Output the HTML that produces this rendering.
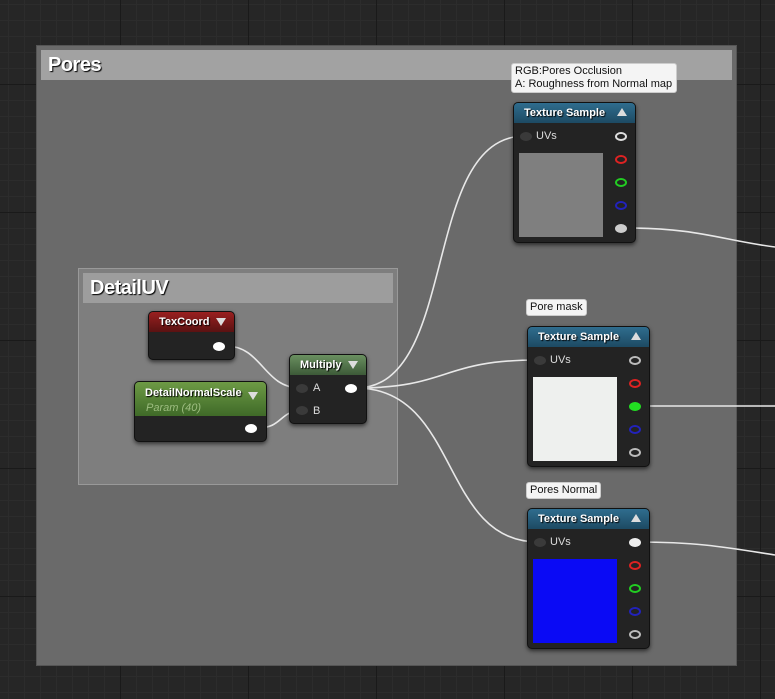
<!DOCTYPE html><html><head><style>
body{margin:0;width:775px;height:699px;overflow:hidden;background:#262626;font-family:"Liberation Sans",sans-serif;position:relative}
.grid{position:absolute;inset:0;background-image:linear-gradient(#1a1a1a 1px,transparent 1px),linear-gradient(90deg,#1a1a1a 1px,transparent 1px),linear-gradient(#2c2c2c 1px,transparent 1px),linear-gradient(90deg,#2c2c2c 1px,transparent 1px);background-size:128px 128px,128px 128px,16px 16px,16px 16px;background-position:-8px 84px,-8px 84px,-8px 4px,-8px 4px}
.cbox{position:absolute;box-sizing:border-box}
.hdr{position:absolute;left:4px;right:4px;top:4px;height:30px;color:#fff;font-weight:bold;font-size:20px;padding-left:7px;line-height:30px;text-shadow:1px 1px 1px #000;letter-spacing:-0.5px}
.node{position:absolute;background:#232323;border:1px solid #111;border-radius:5px;box-shadow:0 2px 4px rgba(0,0,0,.6);color:#ddd;font-size:11px;box-sizing:border-box}
.nh{height:20px;border-radius:4px 4px 0 0;color:#fff;font-weight:bold;font-size:11px;line-height:20px;padding-left:10px;position:relative;text-shadow:1px 1px 1px #000}
.tri{position:absolute;right:8px;top:6px;width:0;height:0;border-left:5px solid transparent;border-right:5px solid transparent}
.up{border-bottom:8px solid #ddd;top:5px}.dn{border-top:8px solid #ddd}
.pin{position:absolute;width:12px;height:9px;border-radius:50%;box-sizing:border-box}
.tip{position:absolute;background:#f4f4f4;border:1px solid #ccc;border-radius:3px;font-size:11px;color:#111;padding:1px 3px;line-height:13px}
.lbl{position:absolute;font-size:11px;color:#ddd}
</style></head><body>
<div class="grid"></div>
<div class="cbox" style="left:36px;top:45px;width:701px;height:621px;background:#6a6a6a;border:1px solid #555"><div class="hdr" style="background:#a2a2a2">Pores</div></div>
<div class="cbox" style="left:78px;top:268px;width:320px;height:217px;background:#7e7e7e;border:1px solid #999"><div class="hdr" style="background:#9d9d9d">DetailUV</div></div>
<svg style="position:absolute;left:0;top:0" width="775" height="699" fill="none" stroke="#e8e8e8" stroke-width="1.6">
<path d="M226 346 C262 346 264 388 300 388"/>
<path d="M258 428 C282 428 280 411 300 411"/>
<path d="M356 388 C460 388 420 136 525 136"/>
<path d="M356 388 C450 388 440 360 538 360"/>
<path d="M356 388 C460 388 440 542 538 542"/>
<path d="M624 228 C700 228 720 240 775 247"/>
<path d="M638 406 L775 406"/>
<path d="M638 542 C700 542 730 548 775 555"/>
</svg>
<div class="tip" style="left:511px;top:63px;width:158px">RGB:Pores Occlusion<br>A: Roughness from Normal map</div>
<div class="tip" style="left:526px;top:299px">Pore mask</div>
<div class="tip" style="left:526px;top:482px">Pores Normal</div>
<div class="node" style="left:513px;top:102px;width:123px;height:141px"><div class="nh" style="background:linear-gradient(#2f6d8e,#1d4a63)">Texture Sample<div class="tri up"></div></div>
<div class="pin" style="left:6px;top:29px;background:#3a3a3a"></div><div class="lbl" style="left:22px;top:27px">UVs</div>
<div style="position:absolute;left:5px;top:50px;width:84px;height:84px;background:#7f7f7f"></div>
<div class="pin" style="left:101px;top:29px;border:2px solid #ddd"></div>
<div class="pin" style="left:101px;top:52px;border:2px solid #d22"></div>
<div class="pin" style="left:101px;top:75px;border:2px solid #2c2"></div>
<div class="pin" style="left:101px;top:98px;border:2px solid #22b"></div>
<div class="pin" style="left:101px;top:121px;background:#ccc"></div></div>
<div class="node" style="left:527px;top:326px;width:123px;height:141px"><div class="nh" style="background:linear-gradient(#2f6d8e,#1d4a63)">Texture Sample<div class="tri up"></div></div>
<div class="pin" style="left:6px;top:29px;background:#3a3a3a"></div><div class="lbl" style="left:22px;top:27px">UVs</div>
<div style="position:absolute;left:5px;top:50px;width:84px;height:84px;background:#eef0ee"></div>
<div class="pin" style="left:101px;top:29px;border:2px solid #bbb"></div>
<div class="pin" style="left:101px;top:52px;border:2px solid #d22"></div>
<div class="pin" style="left:101px;top:75px;background:#2d2"></div>
<div class="pin" style="left:101px;top:98px;border:2px solid #22b"></div>
<div class="pin" style="left:101px;top:121px;border:2px solid #bbb"></div></div>
<div class="node" style="left:527px;top:508px;width:123px;height:141px"><div class="nh" style="background:linear-gradient(#2f6d8e,#1d4a63)">Texture Sample<div class="tri up"></div></div>
<div class="pin" style="left:6px;top:29px;background:#3a3a3a"></div><div class="lbl" style="left:22px;top:27px">UVs</div>
<div style="position:absolute;left:5px;top:50px;width:84px;height:84px;background:#0a0af5"></div>
<div class="pin" style="left:101px;top:29px;background:#eee"></div>
<div class="pin" style="left:101px;top:52px;border:2px solid #d22"></div>
<div class="pin" style="left:101px;top:75px;border:2px solid #2c2"></div>
<div class="pin" style="left:101px;top:98px;border:2px solid #22b"></div>
<div class="pin" style="left:101px;top:121px;border:2px solid #bbb"></div></div>
<div class="node" style="left:148px;top:311px;width:87px;height:49px"><div class="nh" style="background:linear-gradient(#9a2020,#5a1212)">TexCoord<div class="tri dn"></div></div>
<div class="pin" style="left:64px;top:30px;background:#fff"></div></div>
<div class="node" style="left:134px;top:381px;width:133px;height:61px"><div class="nh" style="height:34px;line-height:22px;background:linear-gradient(#6d9a45,#3f6a28)">DetailNormalScale<div class="tri dn" style="top:10px"></div><div style="position:absolute;top:15px;left:11px;font-weight:normal;font-style:italic;color:#9dbd80;text-shadow:none">Param (40)</div></div>
<div class="pin" style="left:110px;top:42px;background:#fff"></div></div>
<div class="node" style="left:289px;top:354px;width:78px;height:70px"><div class="nh" style="background:linear-gradient(#6a9060,#3d5a38)">Multiply<div class="tri dn"></div></div>
<div class="pin" style="left:6px;top:29px;background:#3a3a3a"></div><div class="lbl" style="left:23px;top:27px">A</div>
<div class="pin" style="left:6px;top:51px;background:#3a3a3a"></div><div class="lbl" style="left:23px;top:50px">B</div>
<div class="pin" style="left:55px;top:29px;background:#fff"></div></div>
</body></html>
